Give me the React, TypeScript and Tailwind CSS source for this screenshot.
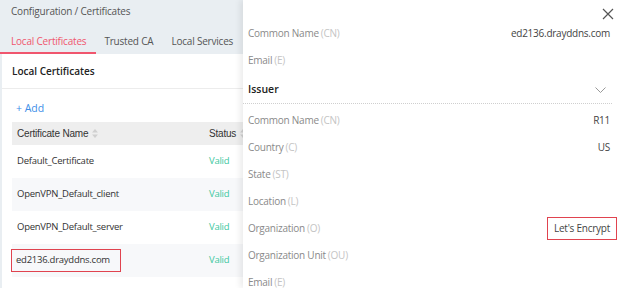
import React from 'react';

const rows = [
  { name: 'Default_Certificate', status: 'Valid' },
  { name: 'OpenVPN_Default_client', status: 'Valid' },
  { name: 'OpenVPN_Default_server', status: 'Valid' },
  { name: 'ed2136.drayddns.com', status: 'Valid', marked: true },
];

const subject = [
  { label: 'Common Name', code: 'CN', value: 'ed2136.drayddns.com' },
  { label: 'Email', code: 'E', value: '' },
];

const issuer = [
  { label: 'Common Name', code: 'CN', value: 'R11' },
  { label: 'Country', code: 'C', value: 'US' },
  { label: 'State', code: 'ST', value: '' },
  { label: 'Location', code: 'L', value: '' },
  { label: 'Organization', code: 'O', value: "Let's Encrypt", marked: true },
  { label: 'Organization Unit', code: 'OU', value: '' },
  { label: 'Email', code: 'E', value: '' },
];

const SortIcon = () => (
  <svg width="6" height="9" viewBox="0 0 6 9" className="ml-[4px]">
    <path d="M3 0 L6 3.5 H0 Z" fill="#d0d0d0" />
    <path d="M3 9 L6 5.5 H0 Z" fill="#d0d0d0" />
  </svg>
);

const InfoRow = ({ label, code, value, marked }: { label: string; code: string; value: string; marked?: boolean }) => (
  <div className="flex items-center justify-between h-[27px] text-[10px] tracking-[-0.25px]">
    <span className="text-[#8a8a8a]">
      {label}
      <span className="ml-[2px] text-[#c4c4c4]">({code})</span>
    </span>
    {marked ? (
      <span className="border-[1.5px] border-[#e0434f] px-[6px] py-[3px] -mr-[7px] text-[#444]">{value}</span>
    ) : (
      <span className="text-[#444]">{value}</span>
    )}
  </div>
);

export default function App() {
  return (
    <div className="relative w-[624px] h-[288px] overflow-hidden bg-white font-['Open_Sans',sans-serif]">
      <div className="flex flex-col h-full bg-[#e9eef2]">
        <div className="h-[22px] pl-[11px] pt-[4px] text-[10px] tracking-[-0.2px] text-[#555]">Configuration / Certificates</div>
        <div className="flex h-[32px] items-end text-[10px] tracking-[-0.2px]">
          <div className="pl-[11px] pr-[10px] pb-[3px] border-b-2 border-[#f0566e] text-[#f0566e]">Local Certificates</div>
          <div className="px-[8px] pb-[5px] text-[#555]">Trusted CA</div>
          <div className="px-[10px] pb-[5px] text-[#555]">Local Services</div>
        </div>
        <div className="flex-1 flex">
          <div className="w-[2px] h-[222px] bg-[#e9eef2]" />
          <div className="flex-1 bg-white">
            <div className="h-[35px] flex items-center px-[10px] border-b border-[#ececec] text-[10px] font-semibold text-[#222]">
              Local Certificates
            </div>
            <div className="pl-[10px]">
              <div className="h-[33px] flex items-end pb-[5px] pl-[4px] text-[10.5px] text-[#3c8ee8]">+ Add</div>
              <div className="w-[380px]">
                <div className="flex items-center h-[23px] bg-[#eeeeee] text-[10px] tracking-[-0.2px] text-[#333] font-['Liberation_Sans',sans-serif]">
                  <div className="w-[197px] pl-[5px] flex items-center">Certificate Name<SortIcon /></div>
                  <div className="flex items-center">Status<SortIcon /></div>
                </div>
                {rows.map((r, i) => (
                  <div key={r.name} className={`flex items-center h-[33px] text-[9.5px] tracking-[-0.25px] ${i % 2 ? 'bg-[#f7f8fa]' : 'bg-white'}`}>
                    <div className="w-[197px]">
                      {r.marked ? (
                        <span className="inline-block border-[1.5px] border-[#e0434f] pl-[4px] pr-[10px] py-[3px] -ml-[1px] text-[#333]">{r.name}</span>
                      ) : (
                        <span className="pl-[5px] text-[#333]">{r.name}</span>
                      )}
                    </div>
                    <div className="text-[#3cc8a0]">{r.status}</div>
                  </div>
                ))}
              </div>
            </div>
          </div>
        </div>
      </div>

      <div className="absolute top-0 right-0 w-[381px] h-full bg-white shadow-[-3px_0_6px_rgba(0,0,0,0.08)] pl-[5px] pr-[14px]">
        <div className="h-[20px] flex justify-end items-end">
          <svg width="12" height="12" viewBox="0 0 12 12" className="-mr-[4px] mt-[6px]">
            <path d="M1 1 L11 11 M11 1 L1 11" stroke="#555" strokeWidth="1.2" />
          </svg>
        </div>
        {subject.map((s) => (
          <InfoRow key={s.label} {...s} />
        ))}
        <div className="flex items-center justify-between h-[28px] mt-[2px] border-b border-dotted border-[#cfcfcf] -ml-[5px] pl-[5px] -mr-[2px] pr-[6px]">
          <span className="text-[10.5px] font-semibold text-[#222]">Issuer</span>
          <svg width="11" height="6" viewBox="0 0 11 6">
            <path d="M0.5 0.5 L5.5 5.5 L10.5 0.5" fill="none" stroke="#999" strokeWidth="1" />
          </svg>
        </div>
        <div className="pt-[3px]">
          {issuer.map((s) => (
            <InfoRow key={s.label + s.code} {...s} />
          ))}
        </div>
      </div>
    </div>
  );
}
